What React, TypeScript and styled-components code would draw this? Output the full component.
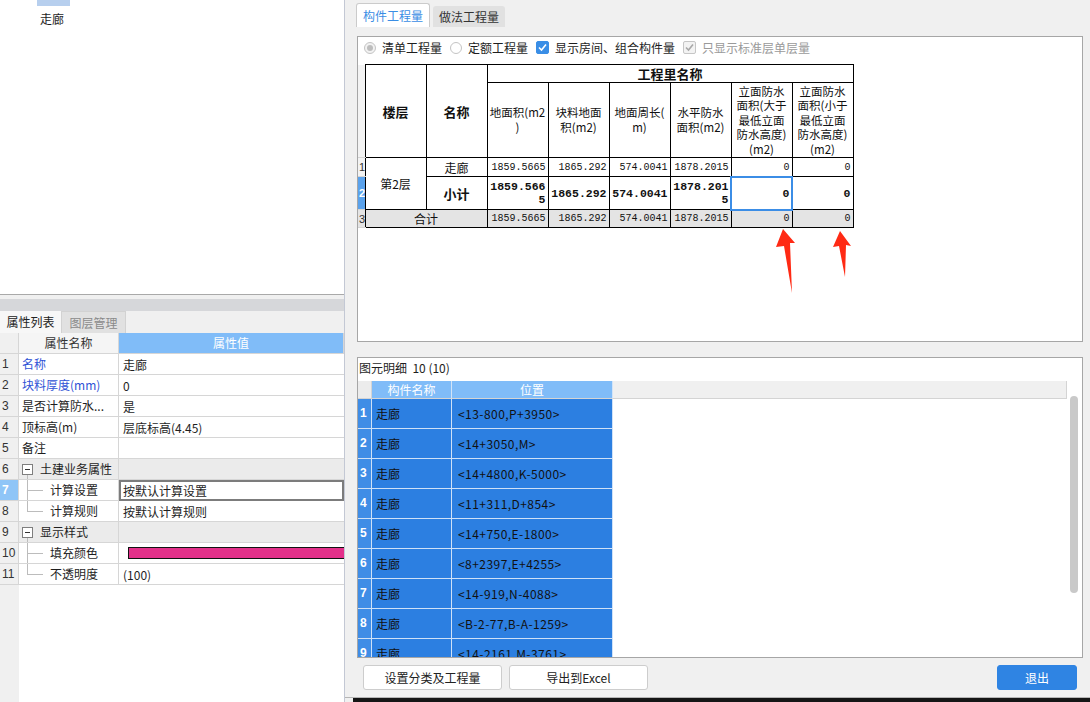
import React from "react";
import styled, { createGlobalStyle, css } from "styled-components";

const GlobalStyle = createGlobalStyle`
    html, body {
        margin: 0;
        padding: 0;
    }
    body {
        background: #f0f0f0;
        color: #1e1e1e;
        font-family: "Noto Sans CJK SC", "Microsoft YaHei", sans-serif;
        font-size: 12px;
    }
`;

const Screen = styled.div`
    display: flex;
    width: 1090px;
    height: 702px;
    overflow: hidden;
`;

/* ---------- left side: tree + property list ---------- */

const LeftPanel = styled.div`
    width: 344px;
    flex: none;
    display: flex;
    flex-direction: column;
    background: white;
    border-right: 1px solid #c3c8d4;
`;

const Tree = styled.div`
    height: 294px;
    flex: none;
    border-bottom: 1px solid #a9a9a9;
`;

const TreeStub = styled.div`
    margin-left: 37px;
    width: 33px;
    height: 6px;
    background: #b7cfee;
`;

const TreeItem = styled.div`
    padding: 6px 0 0 40px;
    line-height: 14px;
`;

const Splitter = styled.div`
    height: 4px;
    flex: none;
    background: #f0f0f0;
    border-bottom: 12px solid #d6d7da;
`;

const PropTabs = styled.div`
    display: flex;
    height: 22px;
    flex: none;
    background: #f0f0f0;
`;

const PropTab = styled.div<{ $active?: boolean; $width: number }>`
    width: ${(p) => p.$width}px;
    box-sizing: border-box;
    text-align: center;
    line-height: 21px;
    ${(p) =>
        p.$active
            ? css`
                  background: #f7f7f7;
                  color: #222;
              `
            : css`
                  background: #e1e1e1;
                  color: #8a8a8a;
                  border: 1px solid #d2d2d2;
                  border-bottom: none;
              `}
`;

const PropGrid = styled.div`
    display: grid;
    grid-template-columns: 19px 100px 1fr;
    height: 21px;
    flex: none;
`;

const PropHead = styled.div<{ $tone: "num" | "name" | "value" }>`
    box-sizing: border-box;
    border-right: 1px solid #d6d6d6;
    border-bottom: 1px solid #d6d6d6;
    line-height: 20px;
    text-align: center;
    background: ${(p) => (p.$tone === "num" ? "#f0f0f0" : p.$tone === "name" ? "#f5f5f5" : "#80bcf8")};
    color: ${(p) => (p.$tone === "value" ? "white" : "#333")};
`;

const PropNum = styled.div<{ $selected?: boolean }>`
    box-sizing: border-box;
    border-right: 1px solid #d6d6d6;
    border-bottom: 1px solid #d6d6d6;
    padding-left: 2px;
    line-height: 20px;
    font-family: "Liberation Sans", sans-serif;
    font-size: 12px;
    background: ${(p) => (p.$selected ? "#8fc5f7" : "#f0f0f0")};
    color: ${(p) => (p.$selected ? "white" : "#333")};
    font-weight: ${(p) => (p.$selected ? 700 : 400)};
`;

const PropName = styled.div<{ $blue?: boolean; $kind?: "group" | "child"; $last?: boolean }>`
    position: relative;
    box-sizing: border-box;
    border-right: 1px solid #d6d6d6;
    border-bottom: 1px solid #d6d6d6;
    padding-left: 3px;
    line-height: 20px;
    white-space: nowrap;
    overflow: hidden;
    color: ${(p) => (p.$blue ? "#2f52d6" : "#1e1e1e")};
    ${(p) =>
        p.$kind === "group" &&
        css`
            display: flex;
            align-items: center;
            background: #ebebeb;
            &::after {
                content: "";
                position: absolute;
                left: 8px;
                top: 16px;
                bottom: 0;
                border-left: 1px solid #bcbcbc;
            }
        `}
    ${(p) =>
        p.$kind === "child" &&
        css`
            padding-left: 31px;
            &::before {
                content: "";
                position: absolute;
                left: 8px;
                top: 0;
                bottom: ${p.$last ? "50%" : "0"};
                border-left: 1px solid #bcbcbc;
            }
            &::after {
                content: "";
                position: absolute;
                left: 8px;
                width: 16px;
                top: 50%;
                border-top: 1px solid #bcbcbc;
            }
        `}
`;

const MinusBox = styled.span`
    display: inline-flex;
    align-items: center;
    justify-content: center;
    box-sizing: border-box;
    width: 11px;
    height: 11px;
    border: 1px solid #7e7e7e;
    background: white;
    margin-right: 7px;
    &::after {
        content: "";
        width: 5px;
        border-top: 1px solid #333;
    }
`;

const PropValue = styled.div<{ $group?: boolean; $editing?: boolean }>`
    display: flex;
    align-items: center;
    box-sizing: border-box;
    border-bottom: 1px solid #d6d6d6;
    padding-left: 4px;
    white-space: nowrap;
    background: ${(p) => (p.$group ? "#ebebeb" : "white")};
    ${(p) =>
        p.$editing &&
        css`
            border: 2px solid #7c7c7c;
            padding-left: 2px;
        `}
`;

const ColorBar = styled.div<{ $color: string }>`
    flex: 1;
    height: 10px;
    margin-left: 5px;
    background: ${(p) => p.$color};
    border: 1px solid #111;
    border-right: none;
`;

const PropFiller = styled.div`
    flex: 1;
    display: grid;
    grid-template-columns: 19px 1fr;
`;

const FillerNum = styled.div`
    background: #f0f0f0;
`;

/* ---------- right side: quantity dialog ---------- */

const Dialog = styled.div`
    flex: 1;
    display: flex;
    flex-direction: column;
    background: #f0f0f0;
`;

const DialogBody = styled.div`
    flex: 1;
    display: flex;
    flex-direction: column;
    padding: 0 7px 0 12px;
    border-bottom: 1px solid #b5b5b5;
`;

const BottomStrip = styled.div`
    height: 4px;
    flex: none;
    background: #151515;
    border-left: 8px solid #f0f0f0;
`;

const TabBar = styled.div`
    display: flex;
    align-items: flex-end;
    gap: 3px;
    height: 27px;
    margin-left: -1px;
`;

const QtyTab = styled.div<{ $active?: boolean }>`
    box-sizing: border-box;
    padding: 0 6px;
    border-radius: 3px 3px 0 0;
    ${(p) =>
        p.$active
            ? css`
                  height: 24px;
                  line-height: 23px;
                  background: white;
                  color: #3a8de4;
                  border: 1px solid #cbcbcb;
                  border-bottom: none;
              `
            : css`
                  height: 21px;
                  line-height: 21px;
                  background: #e1e1e1;
                  color: #333;
              `}
`;

const Panel = styled.div<{ $height: number; $gap: number }>`
    position: relative;
    box-sizing: border-box;
    height: ${(p) => p.$height}px;
    margin-top: ${(p) => p.$gap}px;
    flex: none;
    display: flex;
    flex-direction: column;
    background: white;
    border: 1px solid #a6a6a6;
    overflow: hidden;
`;

const OptionsRow = styled.div`
    display: flex;
    align-items: center;
    gap: 8px;
    height: 21px;
    padding-left: 6px;
`;

const Option = styled.label<{ $disabled?: boolean }>`
    display: flex;
    align-items: center;
    gap: 6px;
    color: ${(p) => (p.$disabled ? "#9a9a9a" : "#1e1e1e")};
`;

const OptionText = styled.span`
    color: #1e1e1e;
`;

const Radio = styled.span<{ $checked?: boolean }>`
    display: inline-flex;
    align-items: center;
    justify-content: center;
    box-sizing: border-box;
    width: 12px;
    height: 12px;
    border-radius: 50%;
    border: 1px solid #c4c4c4;
    background: ${(p) => (p.$checked ? "#f2f2f2" : "white")};
    &::after {
        content: "";
        display: ${(p) => (p.$checked ? "block" : "none")};
        width: 6px;
        height: 6px;
        border-radius: 50%;
        background: #bdbdbd;
    }
`;

const Check = styled.span<{ $disabled?: boolean }>`
    display: inline-flex;
    box-sizing: border-box;
    width: 13px;
    height: 13px;
    border-radius: 2px;
    background: ${(p) => (p.$disabled ? "#f3f3f3" : "#3a8ee6")};
    border: 1px solid ${(p) => (p.$disabled ? "#c6c6c6" : "#3a8ee6")};
`;

const QtyTable = styled.table`
    margin-top: 6px;
    border-collapse: collapse;
    table-layout: fixed;
    width: 495px;
    color: #111;
`;

const Row = styled.tr<{ $h: number }>`
    height: ${(p) => p.$h}px;
`;

const RowNum = styled.td<{ $tone?: "selected" | "total" }>`
    padding: 0;
    border: none;
    border-bottom: 1px solid #d4d4d4;
    overflow: hidden;
    font-family: "Liberation Sans", sans-serif;
    font-size: 11px;
    text-indent: 1px;
    background: ${(p) => (p.$tone === "selected" ? "#5aa2ec" : p.$tone === "total" ? "#e4e4e4" : "#f3f3f3")};
    color: ${(p) => (p.$tone === "selected" ? "white" : "#333")};
    font-weight: ${(p) => (p.$tone === "selected" ? 700 : 400)};
`;

const HeadCell = styled.th<{ $bold?: boolean; $lines?: number }>`
    border: 1px solid #000;
    padding: 0;
    overflow: hidden;
    font-weight: ${(p) => (p.$bold ? 700 : 400)};
    font-size: ${(p) => (p.$bold ? "13px" : "11.5px")};
    line-height: ${(p) => (p.$lines && p.$lines > 2 ? "14.5px" : "15px")};
    text-align: center;
    vertical-align: middle;
    white-space: nowrap;
`;

const TextCell = styled.td<{ $bold?: boolean; $total?: boolean }>`
    border: 1px solid #000;
    padding: 0;
    text-align: center;
    font-size: ${(p) => (p.$bold ? "13px" : "12px")};
    font-weight: ${(p) => (p.$bold ? 700 : 400)};
    background: ${(p) => (p.$total ? "#e4e4e4" : "white")};
`;

const NumberCell = styled.td<{ $bold?: boolean; $total?: boolean; $focus?: boolean }>`
    border: 1px solid #000;
    padding: 0 2px;
    text-align: right;
    white-space: nowrap;
    font-family: "Liberation Mono", "DejaVu Sans Mono", monospace;
    font-size: ${(p) => (p.$bold ? "11.5px" : "10px")};
    font-weight: ${(p) => (p.$bold ? 700 : 400)};
    line-height: 13px;
    background: ${(p) => (p.$total ? "#e4e4e4" : "white")};
    ${(p) =>
        p.$focus &&
        css`
            outline: 2px solid #3b8de6;
            outline-offset: -1px;
        `}
`;

const ArrowLayer = styled.svg`
    position: absolute;
    left: 0;
    top: 0;
    width: 100%;
    height: 100%;
    pointer-events: none;
`;

const DetailTitle = styled.div`
    display: flex;
    align-items: center;
    height: 23px;
    padding: 0 0 4px 1px;
    box-sizing: border-box;
    white-space: pre;
`;

const DetailArea = styled.div`
    flex: 1;
    display: flex;
    overflow: hidden;
`;

const DetailGrid = styled.div`
    flex: 1;
    display: grid;
    grid-template-columns: 14px 80px 161px 1fr;
    grid-template-rows: 18px;
    grid-auto-rows: 30px;
    align-content: start;
`;

const DetailHead = styled.div<{ $tone: "num" | "blue" | "rest" }>`
    box-sizing: border-box;
    line-height: 17px;
    text-align: center;
    border-bottom: 1px solid #d4d4d4;
    border-right: 1px solid ${(p) => (p.$tone === "blue" ? "#d3e4f8" : "#d4d4d4")};
    background: ${(p) => (p.$tone === "num" ? "#ececec" : p.$tone === "blue" ? "#80bcf8" : "#f0f0f0")};
    color: white;
`;

const DetailCell = styled.div<{ $tone?: "num" | "pos" }>`
    box-sizing: border-box;
    overflow: hidden;
    border-right: 1px solid #cfe1f7;
    border-bottom: 1px solid #cfe1f7;
    line-height: 29px;
    white-space: nowrap;
    padding-left: ${(p) => (p.$tone === "num" ? "2px" : p.$tone === "pos" ? "6px" : "4px")};
    letter-spacing: ${(p) => (p.$tone === "pos" ? "0.45px" : "0")};
    background: ${(p) => (p.$tone === "num" ? "#3f8de6" : "#2c7fe1")};
    color: ${(p) => (p.$tone === "num" ? "white" : "#111")};
    font-weight: ${(p) => (p.$tone === "num" ? 700 : 400)};
    font-family: ${(p) => (p.$tone === "num" ? `"Liberation Sans", sans-serif` : "inherit")};
`;

const DetailBlank = styled.div`
    background: white;
`;

const ScrollTrack = styled.div`
    width: 15px;
    flex: none;
    background: white;
`;

const ScrollThumb = styled.div`
    width: 8px;
    height: 197px;
    margin: 15px 0 0 3px;
    border-radius: 4px;
    background: #c9c9c9;
`;

const ButtonRow = styled.div`
    flex: 1;
    display: flex;
    align-items: center;
    gap: 7px;
    padding: 0 6px;
`;

const DialogButton = styled.button<{ $primary?: boolean }>`
    height: 25px;
    width: ${(p) => (p.$primary ? 80 : 139)}px;
    margin-left: ${(p) => (p.$primary ? "auto" : "0")};
    border-radius: 3px;
    border: 1px solid ${(p) => (p.$primary ? "#2f84e3" : "#cdcdcd")};
    background: ${(p) => (p.$primary ? "#2f84e3" : "white")};
    color: ${(p) => (p.$primary ? "white" : "#222")};
    font: inherit;
    padding: 0;
`;

interface IProp {
    n: number;
    name: string;
    value?: string;
    blue?: boolean;
    kind?: "group" | "child";
    last?: boolean;
    editing?: boolean;
    color?: string;
}

const props: IProp[] = [
    { n: 1, name: "名称", value: "走廊", blue: true },
    { n: 2, name: "块料厚度(mm)", value: "0", blue: true },
    { n: 3, name: "是否计算防水...", value: "是" },
    { n: 4, name: "顶标高(m)", value: "层底标高(4.45)" },
    { n: 5, name: "备注", value: "" },
    { n: 6, name: "土建业务属性", kind: "group" },
    { n: 7, name: "计算设置", value: "按默认计算设置", kind: "child", editing: true },
    { n: 8, name: "计算规则", value: "按默认计算规则", kind: "child", last: true },
    { n: 9, name: "显示样式", kind: "group" },
    { n: 10, name: "填充颜色", kind: "child", color: "#e3308a" },
    { n: 11, name: "不透明度", value: "(100)", kind: "child", last: true },
];

const positions = [
    "<13-800,P+3950>",
    "<14+3050,M>",
    "<14+4800,K-5000>",
    "<11+311,D+854>",
    "<14+750,E-1800>",
    "<8+2397,E+4255>",
    "<14-919,N-4088>",
    "<B-2-77,B-A-1259>",
    "<14-2161,M-3761>",
];

const CheckMark = ({ color }: { color: string }) => (
    <svg width="11" height="11" viewBox="0 0 11 11">
        <polyline points="2,5.5 4.5,8 9,2.5" fill="none" stroke={color} strokeWidth="1.6" />
    </svg>
);

const App = (): JSX.Element => {
    return (
        <>
            <GlobalStyle />
            <Screen>
                <LeftPanel>
                    <Tree>
                        <TreeStub />
                        <TreeItem>走廊</TreeItem>
                    </Tree>
                    <Splitter />
                    <PropTabs>
                        <PropTab $active $width={61}>
                            属性列表
                        </PropTab>
                        <PropTab $width={65}>图层管理</PropTab>
                    </PropTabs>
                    <PropGrid>
                        <PropHead $tone="num" />
                        <PropHead $tone="name">属性名称</PropHead>
                        <PropHead $tone="value">属性值</PropHead>
                    </PropGrid>
                    {props.map((p) => (
                        <PropGrid key={p.n}>
                            <PropNum $selected={p.editing}>{p.n}</PropNum>
                            <PropName $blue={p.blue} $kind={p.kind} $last={p.last}>
                                {p.kind === "group" && <MinusBox />}
                                {p.name}
                            </PropName>
                            <PropValue $group={p.kind === "group"} $editing={p.editing}>
                                {p.color ? <ColorBar $color={p.color} /> : p.value}
                            </PropValue>
                        </PropGrid>
                    ))}
                    <PropFiller>
                        <FillerNum />
                        <div />
                    </PropFiller>
                </LeftPanel>

                <Dialog>
                    <DialogBody>
                        <TabBar>
                            <QtyTab $active>构件工程量</QtyTab>
                            <QtyTab>做法工程量</QtyTab>
                        </TabBar>

                        <Panel $height={306} $gap={9}>
                            <OptionsRow>
                                <Option $disabled>
                                    <Radio $checked />
                                    <OptionText>清单工程量</OptionText>
                                </Option>
                                <Option>
                                    <Radio />
                                    定额工程量
                                </Option>
                                <Option>
                                    <Check>
                                        <CheckMark color="white" />
                                    </Check>
                                    显示房间、组合构件量
                                </Option>
                                <Option $disabled>
                                    <Check $disabled>
                                        <CheckMark color="#a8a8a8" />
                                    </Check>
                                    只显示标准层单层量
                                </Option>
                            </OptionsRow>

                            <QtyTable>
                                <colgroup>
                                    <col style={{ width: 7 }} />
                                    {Array.from({ length: 8 }).map((_, i) => (
                                        <col key={i} style={{ width: 61 }} />
                                    ))}
                                </colgroup>
                                <thead>
                                    <Row $h={18}>
                                        <RowNum as="th" rowSpan={2} />
                                        <HeadCell $bold rowSpan={2}>
                                            楼层
                                        </HeadCell>
                                        <HeadCell $bold rowSpan={2}>
                                            名称
                                        </HeadCell>
                                        <HeadCell $bold colSpan={6}>
                                            工程里名称
                                        </HeadCell>
                                    </Row>
                                    <Row $h={75}>
                                        <HeadCell>
                                            地面积(m2
                                            <br />)
                                        </HeadCell>
                                        <HeadCell>
                                            块料地面
                                            <br />
                                            积(m2)
                                        </HeadCell>
                                        <HeadCell>
                                            地面周长(
                                            <br />
                                            m)
                                        </HeadCell>
                                        <HeadCell>
                                            水平防水
                                            <br />
                                            面积(m2)
                                        </HeadCell>
                                        <HeadCell $lines={5}>
                                            立面防水
                                            <br />
                                            面积(大于
                                            <br />
                                            最低立面
                                            <br />
                                            防水高度)
                                            <br />
                                            (m2)
                                        </HeadCell>
                                        <HeadCell $lines={5}>
                                            立面防水
                                            <br />
                                            面积(小于
                                            <br />
                                            最低立面
                                            <br />
                                            防水高度)
                                            <br />
                                            (m2)
                                        </HeadCell>
                                    </Row>
                                </thead>
                                <tbody>
                                    <Row $h={19}>
                                        <RowNum>1</RowNum>
                                        <TextCell rowSpan={2}>第2层</TextCell>
                                        <TextCell>走廊</TextCell>
                                        <NumberCell>1859.5665</NumberCell>
                                        <NumberCell>1865.292</NumberCell>
                                        <NumberCell>574.0041</NumberCell>
                                        <NumberCell>1878.2015</NumberCell>
                                        <NumberCell>0</NumberCell>
                                        <NumberCell>0</NumberCell>
                                    </Row>
                                    <Row $h={33}>
                                        <RowNum $tone="selected">2</RowNum>
                                        <TextCell $bold>小计</TextCell>
                                        <NumberCell $bold>
                                            1859.566
                                            <br />5
                                        </NumberCell>
                                        <NumberCell $bold>1865.292</NumberCell>
                                        <NumberCell $bold>574.0041</NumberCell>
                                        <NumberCell $bold>
                                            1878.201
                                            <br />5
                                        </NumberCell>
                                        <NumberCell $bold $focus>
                                            0
                                        </NumberCell>
                                        <NumberCell $bold>0</NumberCell>
                                    </Row>
                                    <Row $h={18}>
                                        <RowNum $tone="total">3</RowNum>
                                        <TextCell $total colSpan={2}>
                                            合计
                                        </TextCell>
                                        <NumberCell $total>1859.5665</NumberCell>
                                        <NumberCell $total>1865.292</NumberCell>
                                        <NumberCell $total>574.0041</NumberCell>
                                        <NumberCell $total>1878.2015</NumberCell>
                                        <NumberCell $total>0</NumberCell>
                                        <NumberCell $total>0</NumberCell>
                                    </Row>
                                </tbody>
                            </QtyTable>

                            {/* annotation arrows drawn over the panel, page coordinates */}
                            <ArrowLayer>
                                <g transform="translate(-358 -37)" fill="#ff2a14">
                                    <polygon points="783,229 795,243 790,243 792,293 784,246 776,247" />
                                    <polygon points="840,231 851,246 846,245 845,277 839,246 833,247" />
                                </g>
                            </ArrowLayer>
                        </Panel>

                        <Panel $height={301} $gap={15}>
                            <DetailTitle>图元明细  10 (10)</DetailTitle>
                            <DetailArea>
                                <DetailGrid>
                                    <DetailHead $tone="num" />
                                    <DetailHead $tone="blue">构件名称</DetailHead>
                                    <DetailHead $tone="blue">位置</DetailHead>
                                    <DetailHead $tone="rest" />
                                    {positions.map((pos, i) => (
                                        <React.Fragment key={pos}>
                                            <DetailCell $tone="num">{i + 1}</DetailCell>
                                            <DetailCell>走廊</DetailCell>
                                            <DetailCell $tone="pos">{pos}</DetailCell>
                                            <DetailBlank />
                                        </React.Fragment>
                                    ))}
                                </DetailGrid>
                                <ScrollTrack>
                                    <ScrollThumb />
                                </ScrollTrack>
                            </DetailArea>
                        </Panel>

                        <ButtonRow>
                            <DialogButton>设置分类及工程量</DialogButton>
                            <DialogButton>导出到Excel</DialogButton>
                            <DialogButton $primary>退出</DialogButton>
                        </ButtonRow>
                    </DialogBody>
                    <BottomStrip />
                </Dialog>
            </Screen>
        </>
    );
};

export default App;
